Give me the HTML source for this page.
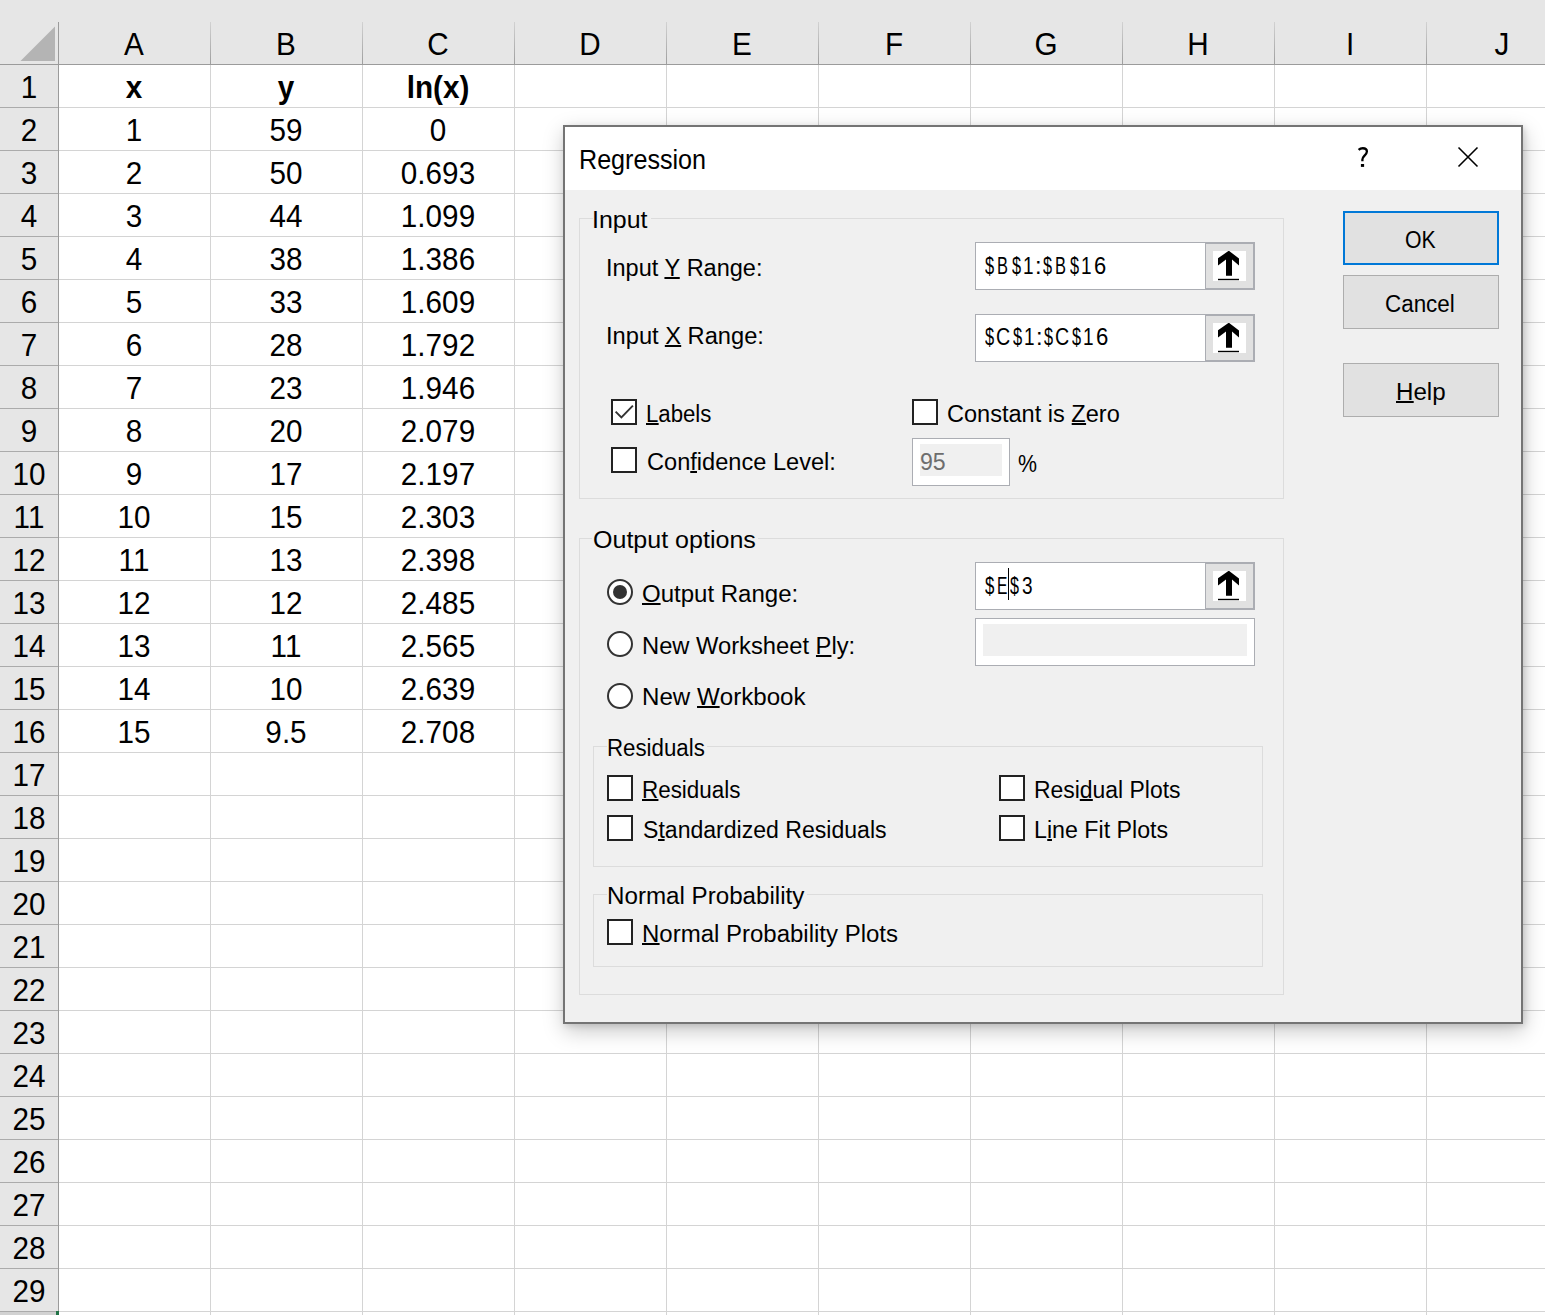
<!DOCTYPE html><html><head><meta charset="utf-8"><style>
html,body{margin:0;padding:0}
body{width:1545px;height:1315px;overflow:hidden;background:#fff;position:relative;font-family:"Liberation Sans",sans-serif}
.a{position:absolute}
.t{position:absolute;white-space:pre;transform-origin:0 0}
.t u{text-decoration:none;position:relative}
.t u::after{content:"";position:absolute;left:0;right:0;bottom:2px;height:2px;background:currentColor}
.c{position:absolute;text-align:center;white-space:pre;color:#000}
.gb{position:absolute;border:1px solid #dcdcdc;box-sizing:border-box}
.cb{position:absolute;width:26px;height:26px;box-sizing:border-box;border:2px solid #222;background:#fff}
.rb{position:absolute;width:26px;height:26px;box-sizing:border-box;border:2px solid #333;border-radius:50%;background:#fff}
.tb{position:absolute;box-sizing:border-box;border:1px solid #abadb3;background:#fff}
.btn{position:absolute;box-sizing:border-box;border:1px solid #adadad;background:#e1e1e1}
</style></head><body>
<div class="a" style="left:0;top:0;width:1545px;height:64px;background:#e6e6e6"></div>
<div class="a" style="left:0;top:0;width:58px;height:1315px;background:#e6e6e6"></div>
<div class="a" style="left:210px;top:64px;width:1px;height:1251px;background:#d4d4d4"></div>
<div class="a" style="left:210px;top:22px;width:1px;height:42px;background:linear-gradient(#d2d2d2,#9e9e9e)"></div>
<div class="a" style="left:362px;top:64px;width:1px;height:1251px;background:#d4d4d4"></div>
<div class="a" style="left:362px;top:22px;width:1px;height:42px;background:linear-gradient(#d2d2d2,#9e9e9e)"></div>
<div class="a" style="left:514px;top:64px;width:1px;height:1251px;background:#d4d4d4"></div>
<div class="a" style="left:514px;top:22px;width:1px;height:42px;background:linear-gradient(#d2d2d2,#9e9e9e)"></div>
<div class="a" style="left:666px;top:64px;width:1px;height:1251px;background:#d4d4d4"></div>
<div class="a" style="left:666px;top:22px;width:1px;height:42px;background:linear-gradient(#d2d2d2,#9e9e9e)"></div>
<div class="a" style="left:818px;top:64px;width:1px;height:1251px;background:#d4d4d4"></div>
<div class="a" style="left:818px;top:22px;width:1px;height:42px;background:linear-gradient(#d2d2d2,#9e9e9e)"></div>
<div class="a" style="left:970px;top:64px;width:1px;height:1251px;background:#d4d4d4"></div>
<div class="a" style="left:970px;top:22px;width:1px;height:42px;background:linear-gradient(#d2d2d2,#9e9e9e)"></div>
<div class="a" style="left:1122px;top:64px;width:1px;height:1251px;background:#d4d4d4"></div>
<div class="a" style="left:1122px;top:22px;width:1px;height:42px;background:linear-gradient(#d2d2d2,#9e9e9e)"></div>
<div class="a" style="left:1274px;top:64px;width:1px;height:1251px;background:#d4d4d4"></div>
<div class="a" style="left:1274px;top:22px;width:1px;height:42px;background:linear-gradient(#d2d2d2,#9e9e9e)"></div>
<div class="a" style="left:1426px;top:64px;width:1px;height:1251px;background:#d4d4d4"></div>
<div class="a" style="left:1426px;top:22px;width:1px;height:42px;background:linear-gradient(#d2d2d2,#9e9e9e)"></div>
<div class="a" style="left:58px;top:107px;width:1487px;height:1px;background:#d4d4d4"></div>
<div class="a" style="left:0;top:107px;width:58px;height:1px;background:#ababab"></div>
<div class="a" style="left:58px;top:150px;width:1487px;height:1px;background:#d4d4d4"></div>
<div class="a" style="left:0;top:150px;width:58px;height:1px;background:#ababab"></div>
<div class="a" style="left:58px;top:193px;width:1487px;height:1px;background:#d4d4d4"></div>
<div class="a" style="left:0;top:193px;width:58px;height:1px;background:#ababab"></div>
<div class="a" style="left:58px;top:236px;width:1487px;height:1px;background:#d4d4d4"></div>
<div class="a" style="left:0;top:236px;width:58px;height:1px;background:#ababab"></div>
<div class="a" style="left:58px;top:279px;width:1487px;height:1px;background:#d4d4d4"></div>
<div class="a" style="left:0;top:279px;width:58px;height:1px;background:#ababab"></div>
<div class="a" style="left:58px;top:322px;width:1487px;height:1px;background:#d4d4d4"></div>
<div class="a" style="left:0;top:322px;width:58px;height:1px;background:#ababab"></div>
<div class="a" style="left:58px;top:365px;width:1487px;height:1px;background:#d4d4d4"></div>
<div class="a" style="left:0;top:365px;width:58px;height:1px;background:#ababab"></div>
<div class="a" style="left:58px;top:408px;width:1487px;height:1px;background:#d4d4d4"></div>
<div class="a" style="left:0;top:408px;width:58px;height:1px;background:#ababab"></div>
<div class="a" style="left:58px;top:451px;width:1487px;height:1px;background:#d4d4d4"></div>
<div class="a" style="left:0;top:451px;width:58px;height:1px;background:#ababab"></div>
<div class="a" style="left:58px;top:494px;width:1487px;height:1px;background:#d4d4d4"></div>
<div class="a" style="left:0;top:494px;width:58px;height:1px;background:#ababab"></div>
<div class="a" style="left:58px;top:537px;width:1487px;height:1px;background:#d4d4d4"></div>
<div class="a" style="left:0;top:537px;width:58px;height:1px;background:#ababab"></div>
<div class="a" style="left:58px;top:580px;width:1487px;height:1px;background:#d4d4d4"></div>
<div class="a" style="left:0;top:580px;width:58px;height:1px;background:#ababab"></div>
<div class="a" style="left:58px;top:623px;width:1487px;height:1px;background:#d4d4d4"></div>
<div class="a" style="left:0;top:623px;width:58px;height:1px;background:#ababab"></div>
<div class="a" style="left:58px;top:666px;width:1487px;height:1px;background:#d4d4d4"></div>
<div class="a" style="left:0;top:666px;width:58px;height:1px;background:#ababab"></div>
<div class="a" style="left:58px;top:709px;width:1487px;height:1px;background:#d4d4d4"></div>
<div class="a" style="left:0;top:709px;width:58px;height:1px;background:#ababab"></div>
<div class="a" style="left:58px;top:752px;width:1487px;height:1px;background:#d4d4d4"></div>
<div class="a" style="left:0;top:752px;width:58px;height:1px;background:#ababab"></div>
<div class="a" style="left:58px;top:795px;width:1487px;height:1px;background:#d4d4d4"></div>
<div class="a" style="left:0;top:795px;width:58px;height:1px;background:#ababab"></div>
<div class="a" style="left:58px;top:838px;width:1487px;height:1px;background:#d4d4d4"></div>
<div class="a" style="left:0;top:838px;width:58px;height:1px;background:#ababab"></div>
<div class="a" style="left:58px;top:881px;width:1487px;height:1px;background:#d4d4d4"></div>
<div class="a" style="left:0;top:881px;width:58px;height:1px;background:#ababab"></div>
<div class="a" style="left:58px;top:924px;width:1487px;height:1px;background:#d4d4d4"></div>
<div class="a" style="left:0;top:924px;width:58px;height:1px;background:#ababab"></div>
<div class="a" style="left:58px;top:967px;width:1487px;height:1px;background:#d4d4d4"></div>
<div class="a" style="left:0;top:967px;width:58px;height:1px;background:#ababab"></div>
<div class="a" style="left:58px;top:1010px;width:1487px;height:1px;background:#d4d4d4"></div>
<div class="a" style="left:0;top:1010px;width:58px;height:1px;background:#ababab"></div>
<div class="a" style="left:58px;top:1053px;width:1487px;height:1px;background:#d4d4d4"></div>
<div class="a" style="left:0;top:1053px;width:58px;height:1px;background:#ababab"></div>
<div class="a" style="left:58px;top:1096px;width:1487px;height:1px;background:#d4d4d4"></div>
<div class="a" style="left:0;top:1096px;width:58px;height:1px;background:#ababab"></div>
<div class="a" style="left:58px;top:1139px;width:1487px;height:1px;background:#d4d4d4"></div>
<div class="a" style="left:0;top:1139px;width:58px;height:1px;background:#ababab"></div>
<div class="a" style="left:58px;top:1182px;width:1487px;height:1px;background:#d4d4d4"></div>
<div class="a" style="left:0;top:1182px;width:58px;height:1px;background:#ababab"></div>
<div class="a" style="left:58px;top:1225px;width:1487px;height:1px;background:#d4d4d4"></div>
<div class="a" style="left:0;top:1225px;width:58px;height:1px;background:#ababab"></div>
<div class="a" style="left:58px;top:1268px;width:1487px;height:1px;background:#d4d4d4"></div>
<div class="a" style="left:0;top:1268px;width:58px;height:1px;background:#ababab"></div>
<div class="a" style="left:58px;top:1311px;width:1487px;height:1px;background:#d4d4d4"></div>
<div class="a" style="left:0;top:1311px;width:58px;height:1px;background:#ababab"></div>
<div class="a" style="left:0;top:64px;width:1545px;height:1px;background:#9b9b9b"></div>
<div class="a" style="left:58px;top:22px;width:1px;height:1293px;background:#9b9b9b"></div>
<div class="a" style="left:0;top:1312px;width:56px;height:3px;background:#d2d2d2"></div>
<div class="a" style="left:56px;top:1311px;width:3px;height:4px;background:#217346"></div>
<svg class="a" style="left:0;top:0" width="58" height="64"><polygon points="20.5,61 55,26.5 55,61" fill="#b4b4b4"/></svg>
<div class="c" style="left:58px;top:29.00px;width:152px;font-size:30.6px;line-height:30.6px;transform:scaleX(0.97)">A</div>
<div class="c" style="left:210px;top:29.00px;width:152px;font-size:30.6px;line-height:30.6px;transform:scaleX(0.97)">B</div>
<div class="c" style="left:362px;top:29.00px;width:152px;font-size:30.6px;line-height:30.6px;transform:scaleX(0.97)">C</div>
<div class="c" style="left:514px;top:29.00px;width:152px;font-size:30.6px;line-height:30.6px;transform:scaleX(0.97)">D</div>
<div class="c" style="left:666px;top:29.00px;width:152px;font-size:30.6px;line-height:30.6px;transform:scaleX(0.97)">E</div>
<div class="c" style="left:818px;top:29.00px;width:152px;font-size:30.6px;line-height:30.6px;transform:scaleX(0.97)">F</div>
<div class="c" style="left:970px;top:29.00px;width:152px;font-size:30.6px;line-height:30.6px;transform:scaleX(0.97)">G</div>
<div class="c" style="left:1122px;top:29.00px;width:152px;font-size:30.6px;line-height:30.6px;transform:scaleX(0.97)">H</div>
<div class="c" style="left:1274px;top:29.00px;width:152px;font-size:30.6px;line-height:30.6px;transform:scaleX(0.97)">I</div>
<div class="c" style="left:1426px;top:29.00px;width:152px;font-size:30.6px;line-height:30.6px;transform:scaleX(0.97)">J</div>
<div class="c" style="left:-47.5px;top:72.00px;width:152px;font-size:30.6px;line-height:30.6px;transform:scaleX(0.97)">1</div>
<div class="c" style="left:-47.5px;top:115.00px;width:152px;font-size:30.6px;line-height:30.6px;transform:scaleX(0.97)">2</div>
<div class="c" style="left:-47.5px;top:158.00px;width:152px;font-size:30.6px;line-height:30.6px;transform:scaleX(0.97)">3</div>
<div class="c" style="left:-47.5px;top:201.00px;width:152px;font-size:30.6px;line-height:30.6px;transform:scaleX(0.97)">4</div>
<div class="c" style="left:-47.5px;top:244.00px;width:152px;font-size:30.6px;line-height:30.6px;transform:scaleX(0.97)">5</div>
<div class="c" style="left:-47.5px;top:287.00px;width:152px;font-size:30.6px;line-height:30.6px;transform:scaleX(0.97)">6</div>
<div class="c" style="left:-47.5px;top:330.00px;width:152px;font-size:30.6px;line-height:30.6px;transform:scaleX(0.97)">7</div>
<div class="c" style="left:-47.5px;top:373.00px;width:152px;font-size:30.6px;line-height:30.6px;transform:scaleX(0.97)">8</div>
<div class="c" style="left:-47.5px;top:416.00px;width:152px;font-size:30.6px;line-height:30.6px;transform:scaleX(0.97)">9</div>
<div class="c" style="left:-47.5px;top:459.00px;width:152px;font-size:30.6px;line-height:30.6px;transform:scaleX(0.97)">10</div>
<div class="c" style="left:-47.5px;top:502.00px;width:152px;font-size:30.6px;line-height:30.6px;transform:scaleX(0.97)">11</div>
<div class="c" style="left:-47.5px;top:545.00px;width:152px;font-size:30.6px;line-height:30.6px;transform:scaleX(0.97)">12</div>
<div class="c" style="left:-47.5px;top:588.00px;width:152px;font-size:30.6px;line-height:30.6px;transform:scaleX(0.97)">13</div>
<div class="c" style="left:-47.5px;top:631.00px;width:152px;font-size:30.6px;line-height:30.6px;transform:scaleX(0.97)">14</div>
<div class="c" style="left:-47.5px;top:674.00px;width:152px;font-size:30.6px;line-height:30.6px;transform:scaleX(0.97)">15</div>
<div class="c" style="left:-47.5px;top:717.00px;width:152px;font-size:30.6px;line-height:30.6px;transform:scaleX(0.97)">16</div>
<div class="c" style="left:-47.5px;top:760.00px;width:152px;font-size:30.6px;line-height:30.6px;transform:scaleX(0.97)">17</div>
<div class="c" style="left:-47.5px;top:803.00px;width:152px;font-size:30.6px;line-height:30.6px;transform:scaleX(0.97)">18</div>
<div class="c" style="left:-47.5px;top:846.00px;width:152px;font-size:30.6px;line-height:30.6px;transform:scaleX(0.97)">19</div>
<div class="c" style="left:-47.5px;top:889.00px;width:152px;font-size:30.6px;line-height:30.6px;transform:scaleX(0.97)">20</div>
<div class="c" style="left:-47.5px;top:932.00px;width:152px;font-size:30.6px;line-height:30.6px;transform:scaleX(0.97)">21</div>
<div class="c" style="left:-47.5px;top:975.00px;width:152px;font-size:30.6px;line-height:30.6px;transform:scaleX(0.97)">22</div>
<div class="c" style="left:-47.5px;top:1018.00px;width:152px;font-size:30.6px;line-height:30.6px;transform:scaleX(0.97)">23</div>
<div class="c" style="left:-47.5px;top:1061.00px;width:152px;font-size:30.6px;line-height:30.6px;transform:scaleX(0.97)">24</div>
<div class="c" style="left:-47.5px;top:1104.00px;width:152px;font-size:30.6px;line-height:30.6px;transform:scaleX(0.97)">25</div>
<div class="c" style="left:-47.5px;top:1147.00px;width:152px;font-size:30.6px;line-height:30.6px;transform:scaleX(0.97)">26</div>
<div class="c" style="left:-47.5px;top:1190.00px;width:152px;font-size:30.6px;line-height:30.6px;transform:scaleX(0.97)">27</div>
<div class="c" style="left:-47.5px;top:1233.00px;width:152px;font-size:30.6px;line-height:30.6px;transform:scaleX(0.97)">28</div>
<div class="c" style="left:-47.5px;top:1276.00px;width:152px;font-size:30.6px;line-height:30.6px;transform:scaleX(0.97)">29</div>
<div class="c" style="left:58px;top:72.00px;width:152px;font-size:30.6px;line-height:30.6px;transform:scaleX(0.97);font-weight:bold">x</div>
<div class="c" style="left:210px;top:72.00px;width:152px;font-size:30.6px;line-height:30.6px;transform:scaleX(0.97);font-weight:bold">y</div>
<div class="c" style="left:362px;top:72.00px;width:152px;font-size:30.6px;line-height:30.6px;transform:scaleX(0.97);font-weight:bold">ln(x)</div>
<div class="c" style="left:58px;top:115.00px;width:152px;font-size:30.6px;line-height:30.6px;transform:scaleX(0.97)">1</div>
<div class="c" style="left:210px;top:115.00px;width:152px;font-size:30.6px;line-height:30.6px;transform:scaleX(0.97)">59</div>
<div class="c" style="left:362px;top:115.00px;width:152px;font-size:30.6px;line-height:30.6px;transform:scaleX(0.97)">0</div>
<div class="c" style="left:58px;top:158.00px;width:152px;font-size:30.6px;line-height:30.6px;transform:scaleX(0.97)">2</div>
<div class="c" style="left:210px;top:158.00px;width:152px;font-size:30.6px;line-height:30.6px;transform:scaleX(0.97)">50</div>
<div class="c" style="left:362px;top:158.00px;width:152px;font-size:30.6px;line-height:30.6px;transform:scaleX(0.97)">0.693</div>
<div class="c" style="left:58px;top:201.00px;width:152px;font-size:30.6px;line-height:30.6px;transform:scaleX(0.97)">3</div>
<div class="c" style="left:210px;top:201.00px;width:152px;font-size:30.6px;line-height:30.6px;transform:scaleX(0.97)">44</div>
<div class="c" style="left:362px;top:201.00px;width:152px;font-size:30.6px;line-height:30.6px;transform:scaleX(0.97)">1.099</div>
<div class="c" style="left:58px;top:244.00px;width:152px;font-size:30.6px;line-height:30.6px;transform:scaleX(0.97)">4</div>
<div class="c" style="left:210px;top:244.00px;width:152px;font-size:30.6px;line-height:30.6px;transform:scaleX(0.97)">38</div>
<div class="c" style="left:362px;top:244.00px;width:152px;font-size:30.6px;line-height:30.6px;transform:scaleX(0.97)">1.386</div>
<div class="c" style="left:58px;top:287.00px;width:152px;font-size:30.6px;line-height:30.6px;transform:scaleX(0.97)">5</div>
<div class="c" style="left:210px;top:287.00px;width:152px;font-size:30.6px;line-height:30.6px;transform:scaleX(0.97)">33</div>
<div class="c" style="left:362px;top:287.00px;width:152px;font-size:30.6px;line-height:30.6px;transform:scaleX(0.97)">1.609</div>
<div class="c" style="left:58px;top:330.00px;width:152px;font-size:30.6px;line-height:30.6px;transform:scaleX(0.97)">6</div>
<div class="c" style="left:210px;top:330.00px;width:152px;font-size:30.6px;line-height:30.6px;transform:scaleX(0.97)">28</div>
<div class="c" style="left:362px;top:330.00px;width:152px;font-size:30.6px;line-height:30.6px;transform:scaleX(0.97)">1.792</div>
<div class="c" style="left:58px;top:373.00px;width:152px;font-size:30.6px;line-height:30.6px;transform:scaleX(0.97)">7</div>
<div class="c" style="left:210px;top:373.00px;width:152px;font-size:30.6px;line-height:30.6px;transform:scaleX(0.97)">23</div>
<div class="c" style="left:362px;top:373.00px;width:152px;font-size:30.6px;line-height:30.6px;transform:scaleX(0.97)">1.946</div>
<div class="c" style="left:58px;top:416.00px;width:152px;font-size:30.6px;line-height:30.6px;transform:scaleX(0.97)">8</div>
<div class="c" style="left:210px;top:416.00px;width:152px;font-size:30.6px;line-height:30.6px;transform:scaleX(0.97)">20</div>
<div class="c" style="left:362px;top:416.00px;width:152px;font-size:30.6px;line-height:30.6px;transform:scaleX(0.97)">2.079</div>
<div class="c" style="left:58px;top:459.00px;width:152px;font-size:30.6px;line-height:30.6px;transform:scaleX(0.97)">9</div>
<div class="c" style="left:210px;top:459.00px;width:152px;font-size:30.6px;line-height:30.6px;transform:scaleX(0.97)">17</div>
<div class="c" style="left:362px;top:459.00px;width:152px;font-size:30.6px;line-height:30.6px;transform:scaleX(0.97)">2.197</div>
<div class="c" style="left:58px;top:502.00px;width:152px;font-size:30.6px;line-height:30.6px;transform:scaleX(0.97)">10</div>
<div class="c" style="left:210px;top:502.00px;width:152px;font-size:30.6px;line-height:30.6px;transform:scaleX(0.97)">15</div>
<div class="c" style="left:362px;top:502.00px;width:152px;font-size:30.6px;line-height:30.6px;transform:scaleX(0.97)">2.303</div>
<div class="c" style="left:58px;top:545.00px;width:152px;font-size:30.6px;line-height:30.6px;transform:scaleX(0.97)">11</div>
<div class="c" style="left:210px;top:545.00px;width:152px;font-size:30.6px;line-height:30.6px;transform:scaleX(0.97)">13</div>
<div class="c" style="left:362px;top:545.00px;width:152px;font-size:30.6px;line-height:30.6px;transform:scaleX(0.97)">2.398</div>
<div class="c" style="left:58px;top:588.00px;width:152px;font-size:30.6px;line-height:30.6px;transform:scaleX(0.97)">12</div>
<div class="c" style="left:210px;top:588.00px;width:152px;font-size:30.6px;line-height:30.6px;transform:scaleX(0.97)">12</div>
<div class="c" style="left:362px;top:588.00px;width:152px;font-size:30.6px;line-height:30.6px;transform:scaleX(0.97)">2.485</div>
<div class="c" style="left:58px;top:631.00px;width:152px;font-size:30.6px;line-height:30.6px;transform:scaleX(0.97)">13</div>
<div class="c" style="left:210px;top:631.00px;width:152px;font-size:30.6px;line-height:30.6px;transform:scaleX(0.97)">11</div>
<div class="c" style="left:362px;top:631.00px;width:152px;font-size:30.6px;line-height:30.6px;transform:scaleX(0.97)">2.565</div>
<div class="c" style="left:58px;top:674.00px;width:152px;font-size:30.6px;line-height:30.6px;transform:scaleX(0.97)">14</div>
<div class="c" style="left:210px;top:674.00px;width:152px;font-size:30.6px;line-height:30.6px;transform:scaleX(0.97)">10</div>
<div class="c" style="left:362px;top:674.00px;width:152px;font-size:30.6px;line-height:30.6px;transform:scaleX(0.97)">2.639</div>
<div class="c" style="left:58px;top:717.00px;width:152px;font-size:30.6px;line-height:30.6px;transform:scaleX(0.97)">15</div>
<div class="c" style="left:210px;top:717.00px;width:152px;font-size:30.6px;line-height:30.6px;transform:scaleX(0.97)">9.5</div>
<div class="c" style="left:362px;top:717.00px;width:152px;font-size:30.6px;line-height:30.6px;transform:scaleX(0.97)">2.708</div>
<div class="a" style="left:563px;top:125px;width:960px;height:899px;box-shadow:2px 2px 6px rgba(0,0,0,0.12),1px 7px 20px rgba(0,0,0,0.22);background:#f0f0f0;box-sizing:border-box;border:2px solid #747474"></div>
<div class="a" style="left:565px;top:127px;width:956px;height:63px;background:#fff"></div>
<svg class="a" style="left:1450px;top:140px" width="36" height="36"><path d="M8.5 7.5 L27.5 26.5 M27.5 7.5 L8.5 26.5" stroke="#000" stroke-width="1.6" fill="none"/></svg>
<div class="gb" style="left:579px;top:218px;width:705px;height:281px"></div>
<div class="gb" style="left:579px;top:538px;width:705px;height:457px"></div>
<div class="gb" style="left:593px;top:746px;width:670px;height:121px"></div>
<div class="gb" style="left:593px;top:894px;width:670px;height:73px"></div>
<div class="a" style="left:593px;top:215px;width:58px;height:7px;background:#f0f0f0"></div>
<div class="a" style="left:592px;top:535px;width:166px;height:7px;background:#f0f0f0"></div>
<div class="a" style="left:607px;top:743px;width:100px;height:7px;background:#f0f0f0"></div>
<div class="a" style="left:607px;top:891px;width:200px;height:7px;background:#f0f0f0"></div>
<div class="tb" style="left:975px;top:242px;width:280px;height:48px"></div>
<div class="a" style="left:1205px;top:242px;width:50px;height:48px;box-sizing:border-box;border:2px solid #abadb3;border-left:1px solid #abadb3;background:#e1e1e1"></div>
<div class="a" style="left:1213px;top:251px;width:33px;height:30px;background:#fff"></div>
<svg class="a" style="left:1213px;top:251px" width="33" height="30"><polygon points="15.8,-0.3 26,7.5 26,14.6 19,8.6 19,24.8 13,24.8 13,8.6 5,14.6 5,7.3" fill="#000"/><rect x="5" y="27.8" width="21" height="1.4" fill="#000"/></svg>
<div class="tb" style="left:975px;top:314px;width:280px;height:48px"></div>
<div class="a" style="left:1205px;top:314px;width:50px;height:48px;box-sizing:border-box;border:2px solid #abadb3;border-left:1px solid #abadb3;background:#e1e1e1"></div>
<div class="a" style="left:1213px;top:323px;width:33px;height:30px;background:#fff"></div>
<svg class="a" style="left:1213px;top:323px" width="33" height="30"><polygon points="15.8,-0.3 26,7.5 26,14.6 19,8.6 19,24.8 13,24.8 13,8.6 5,14.6 5,7.3" fill="#000"/><rect x="5" y="27.8" width="21" height="1.4" fill="#000"/></svg>
<div class="tb" style="left:975px;top:562px;width:280px;height:48px"></div>
<div class="a" style="left:1205px;top:562px;width:50px;height:48px;box-sizing:border-box;border:2px solid #abadb3;border-left:1px solid #abadb3;background:#e1e1e1"></div>
<div class="a" style="left:1213px;top:571px;width:33px;height:30px;background:#fff"></div>
<svg class="a" style="left:1213px;top:571px" width="33" height="30"><polygon points="15.8,-0.3 26,7.5 26,14.6 19,8.6 19,24.8 13,24.8 13,8.6 5,14.6 5,7.3" fill="#000"/><rect x="5" y="27.8" width="21" height="1.4" fill="#000"/></svg>
<div class="tb" style="left:975px;top:618px;width:280px;height:48px"></div>
<div class="a" style="left:983px;top:624px;width:264px;height:32px;background:#f0f0f0"></div>
<div class="a" style="left:1008px;top:568px;width:1px;height:32px;background:#000"></div>
<div class="tb" style="left:912px;top:438px;width:98px;height:48px"></div>
<div class="a" style="left:920px;top:444px;width:82px;height:32px;background:#f0f0f0"></div>
<div class="cb" style="left:611px;top:399px"></div>
<div class="cb" style="left:611px;top:447px"></div>
<div class="cb" style="left:912px;top:399px"></div>
<div class="cb" style="left:607px;top:775px"></div>
<div class="cb" style="left:607px;top:815px"></div>
<div class="cb" style="left:999px;top:775px"></div>
<div class="cb" style="left:999px;top:815px"></div>
<div class="cb" style="left:607px;top:919px"></div>
<svg class="a" style="left:611px;top:399px" width="26" height="26"><path d="M4.6 12.6 L10.4 18.5 L21.9 6.6" stroke="#333" stroke-width="1.9" fill="none"/></svg>
<div class="rb" style="left:607px;top:579px"></div>
<div class="rb" style="left:607px;top:631px"></div>
<div class="rb" style="left:607px;top:683px"></div>
<div class="a" style="left:613px;top:585px;width:14px;height:14px;border-radius:50%;background:#333"></div>
<div class="btn" style="left:1343px;top:211px;width:156px;height:54px;border:2px solid #0078d7"></div>
<div class="btn" style="left:1343px;top:275px;width:156px;height:54px"></div>
<div class="btn" style="left:1343px;top:363px;width:156px;height:54px"></div>
<svg class="a" style="left:1350px;top:140px" width="30" height="35"><path d="M8.6 9.9 C10 8.6 11.6 8.25 12.8 8.25 C15.3 8.25 16.9 9.6 16.9 11.6 C16.9 13.6 15.4 14.8 14.1 16.1 C12.9 17.3 12.4 18.2 12.4 19.6 L12.4 21.3" stroke="#000" stroke-width="2.3" fill="none"/><rect x="10.9" y="24" width="3.2" height="2.9" fill="#000"/></svg>
<div class="t" style="left:579.34px;top:146.00px;font-size:27.62px;line-height:27.62px;transform:scaleX(0.9097);color:#000">Regression</div>
<div class="t" style="left:592.45px;top:208.00px;font-size:24.56px;line-height:24.56px;transform:scaleX(1.0152);color:#000">Input</div>
<div class="t" style="left:606.36px;top:256.00px;font-size:24.56px;line-height:24.56px;transform:scaleX(0.9578);color:#000">Input <u>Y</u> Range:</div>
<div class="t" style="left:606.35px;top:324.00px;font-size:24.56px;line-height:24.56px;transform:scaleX(0.9641);color:#000">Input <u>X</u> Range:</div>
<div class="t" style="left:985.00px;top:254.00px;font-size:24.56px;line-height:24.56px;transform:scaleX(0.6700);color:#000">$</div>
<div class="t" style="left:997.31px;top:254.00px;font-size:24.56px;line-height:24.56px;transform:scaleX(0.6700);color:#000">B</div>
<div class="t" style="left:1012.20px;top:254.00px;font-size:24.56px;line-height:24.56px;transform:scaleX(0.6625);color:#000">$</div>
<div class="t" style="left:1023.21px;top:254.00px;font-size:24.56px;line-height:24.56px;transform:scaleX(0.7726);color:#000">1</div>
<div class="t" style="left:1035.24px;top:254.00px;font-size:24.56px;line-height:24.56px;transform:scaleX(0.9677);color:#000">:</div>
<div class="t" style="left:1043.00px;top:254.00px;font-size:24.56px;line-height:24.56px;transform:scaleX(0.6625);color:#000">$</div>
<div class="t" style="left:1055.21px;top:254.00px;font-size:24.56px;line-height:24.56px;transform:scaleX(0.6700);color:#000">B</div>
<div class="t" style="left:1070.20px;top:254.00px;font-size:24.56px;line-height:24.56px;transform:scaleX(0.6625);color:#000">$</div>
<div class="t" style="left:1081.11px;top:254.00px;font-size:24.56px;line-height:24.56px;transform:scaleX(0.7726);color:#000">1</div>
<div class="t" style="left:1094.47px;top:254.00px;font-size:24.56px;line-height:24.56px;transform:scaleX(0.8945);color:#000">6</div>
<div class="t" style="left:985.00px;top:325.00px;font-size:24.56px;line-height:24.56px;transform:scaleX(0.6700);color:#000">$</div>
<div class="t" style="left:996.28px;top:325.00px;font-size:24.56px;line-height:24.56px;transform:scaleX(0.8007);color:#000">C</div>
<div class="t" style="left:1013.10px;top:325.00px;font-size:24.56px;line-height:24.56px;transform:scaleX(0.6700);color:#000">$</div>
<div class="t" style="left:1024.21px;top:325.00px;font-size:24.56px;line-height:24.56px;transform:scaleX(0.7726);color:#000">1</div>
<div class="t" style="left:1036.14px;top:325.00px;font-size:24.56px;line-height:24.56px;transform:scaleX(0.9677);color:#000">:</div>
<div class="t" style="left:1044.10px;top:325.00px;font-size:24.56px;line-height:24.56px;transform:scaleX(0.6625);color:#000">$</div>
<div class="t" style="left:1055.18px;top:325.00px;font-size:24.56px;line-height:24.56px;transform:scaleX(0.8007);color:#000">C</div>
<div class="t" style="left:1072.00px;top:325.00px;font-size:24.56px;line-height:24.56px;transform:scaleX(0.6625);color:#000">$</div>
<div class="t" style="left:1082.91px;top:325.00px;font-size:24.56px;line-height:24.56px;transform:scaleX(0.7726);color:#000">1</div>
<div class="t" style="left:1096.26px;top:325.00px;font-size:24.56px;line-height:24.56px;transform:scaleX(0.9032);color:#000">6</div>
<div class="t" style="left:645.67px;top:402.00px;font-size:24.56px;line-height:24.56px;transform:scaleX(0.9039);color:#000"><u>L</u>abels</div>
<div class="t" style="left:646.69px;top:450.00px;font-size:24.56px;line-height:24.56px;transform:scaleX(0.9613);color:#000">Con<u>f</u>idence Level:</div>
<div class="t" style="left:947.10px;top:402.00px;font-size:24.56px;line-height:24.56px;transform:scaleX(0.9592);color:#000">Constant is <u>Z</u>ero</div>
<div class="t" style="left:920.22px;top:450.00px;font-size:24.56px;line-height:24.56px;transform:scaleX(0.9414);color:#6d6d6d">95</div>
<div class="t" style="left:1017.63px;top:452.00px;font-size:24.56px;line-height:24.56px;transform:scaleX(0.8701);color:#000">%</div>
<div class="t" style="left:592.83px;top:528.00px;font-size:24.56px;line-height:24.56px;transform:scaleX(1.0199);color:#000">Output options</div>
<div class="t" style="left:641.67px;top:582.00px;font-size:24.56px;line-height:24.56px;transform:scaleX(0.9782);color:#000"><u>O</u>utput Range:</div>
<div class="t" style="left:641.85px;top:634.00px;font-size:24.56px;line-height:24.56px;transform:scaleX(0.9665);color:#000">New Worksheet <u>P</u>ly:</div>
<div class="t" style="left:641.81px;top:685.00px;font-size:24.56px;line-height:24.56px;transform:scaleX(0.9826);color:#000">New <u>W</u>orkbook</div>
<div class="t" style="left:985.00px;top:574.00px;font-size:24.56px;line-height:24.56px;transform:scaleX(0.6848);color:#000">$</div>
<div class="t" style="left:997.09px;top:574.00px;font-size:24.56px;line-height:24.56px;transform:scaleX(0.6327);color:#000">E</div>
<div class="t" style="left:1010.20px;top:574.00px;font-size:24.56px;line-height:24.56px;transform:scaleX(0.6551);color:#000">$</div>
<div class="t" style="left:1022.01px;top:574.00px;font-size:24.56px;line-height:24.56px;transform:scaleX(0.7732);color:#000">3</div>
<div class="t" style="left:607.26px;top:736.00px;font-size:24.56px;line-height:24.56px;transform:scaleX(0.9070);color:#000">Residuals</div>
<div class="t" style="left:641.95px;top:778.00px;font-size:24.56px;line-height:24.56px;transform:scaleX(0.9127);color:#000"><u>R</u>esiduals</div>
<div class="t" style="left:642.78px;top:818.00px;font-size:24.56px;line-height:24.56px;transform:scaleX(0.9395);color:#000">S<u>t</u>andardized Residuals</div>
<div class="t" style="left:1033.91px;top:778.00px;font-size:24.56px;line-height:24.56px;transform:scaleX(0.9337);color:#000">Resi<u>d</u>ual Plots</div>
<div class="t" style="left:1033.89px;top:818.00px;font-size:24.56px;line-height:24.56px;transform:scaleX(0.9454);color:#000">L<u>i</u>ne Fit Plots</div>
<div class="t" style="left:606.91px;top:884.00px;font-size:24.56px;line-height:24.56px;transform:scaleX(0.9841);color:#000">Normal Probability</div>
<div class="t" style="left:642.02px;top:922.00px;font-size:24.56px;line-height:24.56px;transform:scaleX(0.9772);color:#000"><u>N</u>ormal Probability Plots</div>
<div class="t" style="left:1405.20px;top:228.00px;font-size:24.56px;line-height:24.56px;transform:scaleX(0.8657);color:#000">OK</div>
<div class="t" style="left:1385.35px;top:292.00px;font-size:24.56px;line-height:24.56px;transform:scaleX(0.9132);color:#000">Cancel</div>
<div class="t" style="left:1395.91px;top:380.00px;font-size:24.56px;line-height:24.56px;transform:scaleX(0.9831);color:#000"><u>H</u>elp</div>
</body></html>
